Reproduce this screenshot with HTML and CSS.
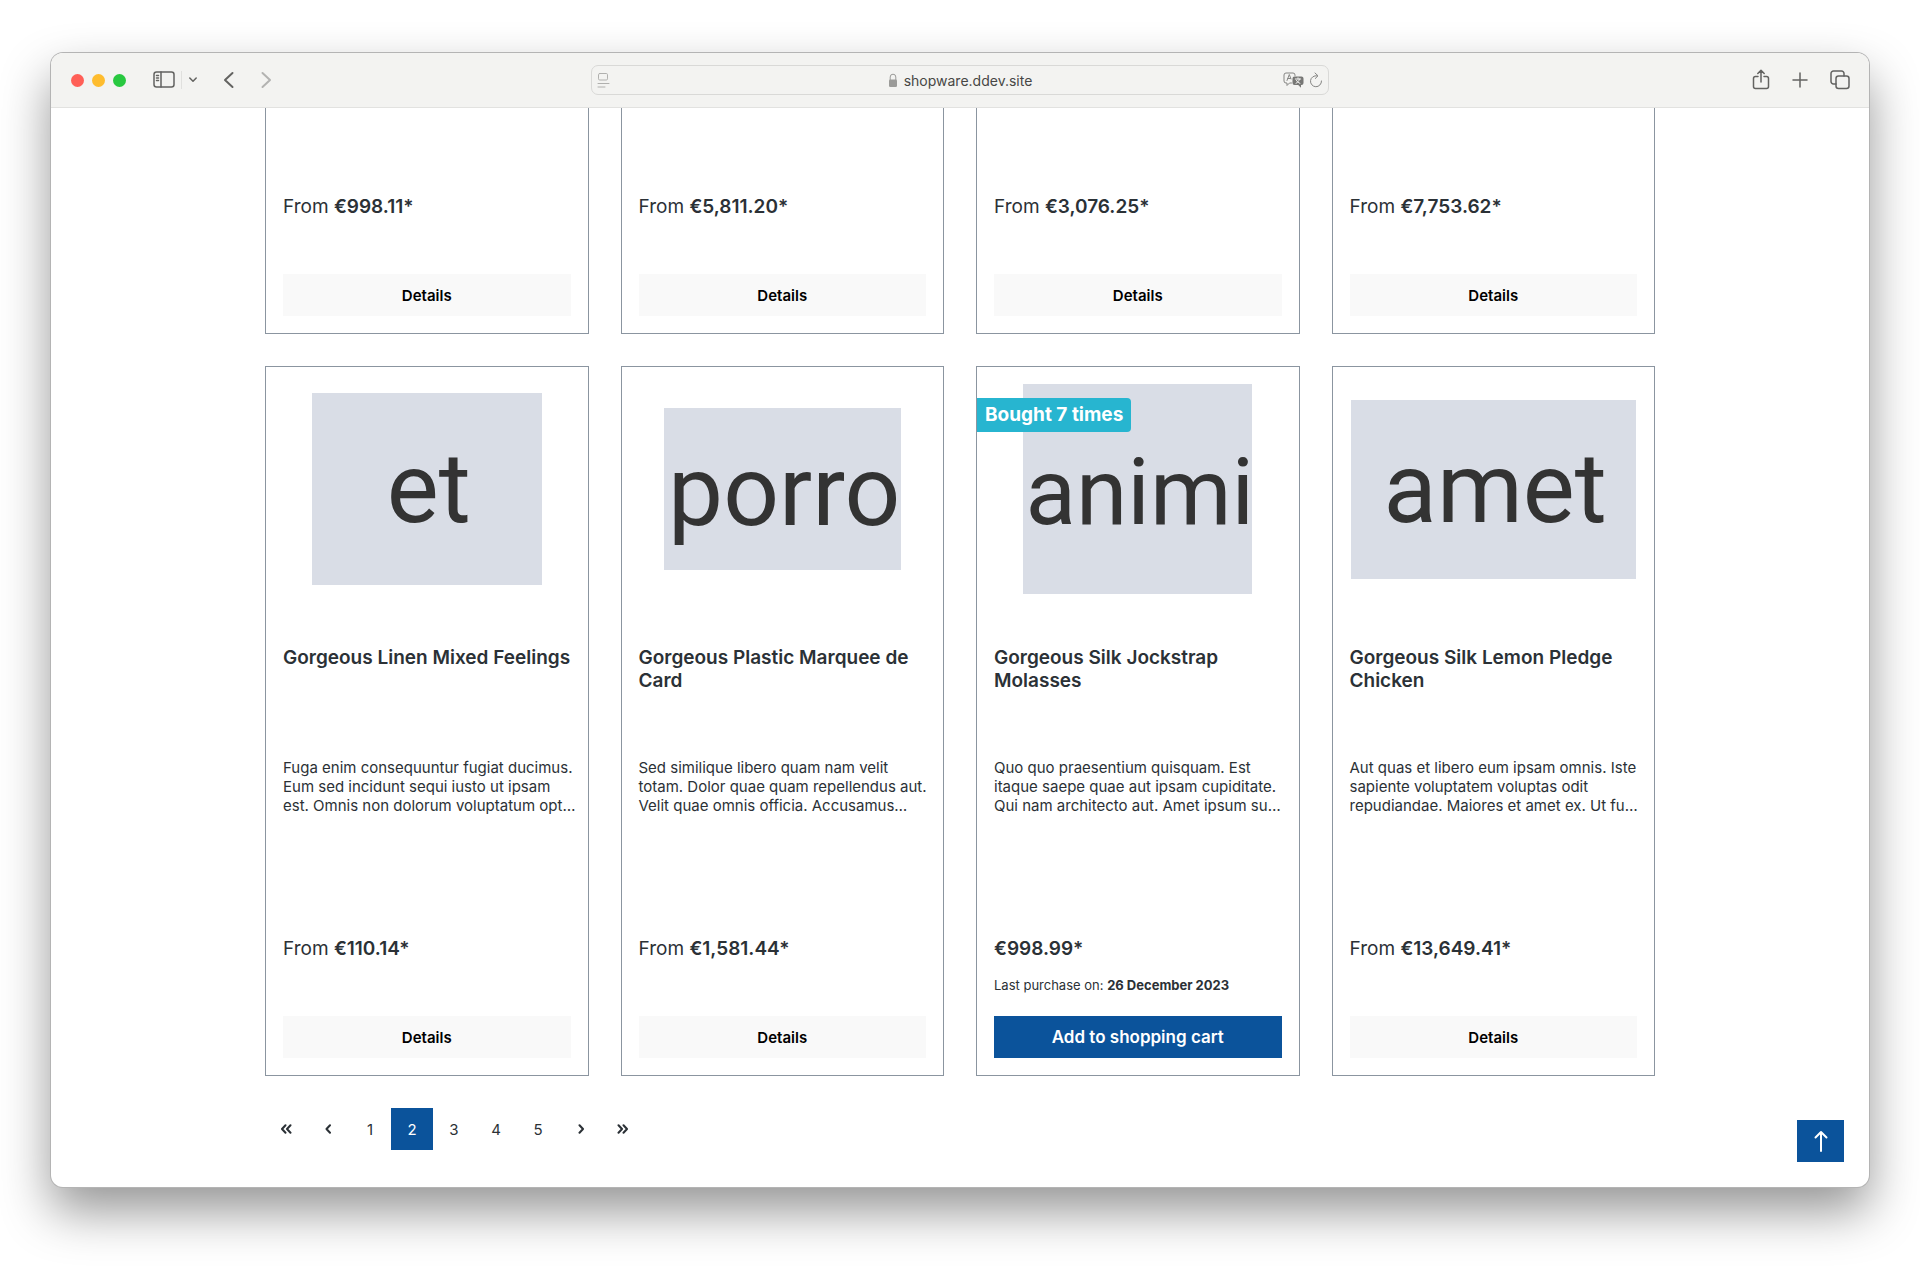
FILE: index.html
```html
<!DOCTYPE html>
<html lang="en">
<head>
<meta charset="utf-8">
<title>shopware.ddev.site</title>
<link rel="stylesheet" href="styles.css">
</head>
<body>
<div class="window">
  <header class="toolbar">
    <div class="tools tools-left">
      <span class="lights"><i class="light red"></i><i class="light yellow"></i><i class="light green"></i></span>
      <button class="tool sidebar" aria-label="Sidebar"><svg width="22" height="18" viewBox="0 0 22 18"><rect x="1" y="1" width="20" height="15" rx="2.5"/><path d="M8 1v15M3.500 4.500h2M3.500 7h2M3.500 9.500h2"/></svg></button>
      <span class="divider"></span>
      <button class="tool more" aria-label="Tab groups"><svg width="10" height="8" viewBox="0 0 10 8"><path d="M1.800 2l3.200 3.300L8.200 2"/></svg></button>
      <button class="tool back" aria-label="Back"><svg width="12" height="18" viewBox="0 0 12 18"><path d="M9.500 2L2 9l7.500 7"/></svg></button>
      <button class="tool forward" aria-label="Forward"><svg width="12" height="18" viewBox="0 0 12 18"><path d="M2.500 2L10 9l-7.500 7"/></svg></button>
    </div>
    <div class="address">
      <svg class="reader" width="14" height="17" viewBox="0 0 14 17"><rect x="1.500" y="1.500" width="9" height="6.500" rx="1.200"/><path d="M1 11.500h11M1 15h7"/></svg>
      <span class="host"><svg width="10" height="15" viewBox="0 0 10 15"><path class="shackle" d="M2.200 7V4a2.800 2.800 0 0 1 5.600 0v3"/><rect class="lock" x="1" y="6.500" width="8" height="7.500" rx="1.300"/></svg>shopware.ddev.site</span>
      <span class="address-end">
        <svg width="21" height="16" viewBox="0 0 21 16"><path d="M8.500 11H6.500L4 13.500V11H3a2 2 0 0 1-2-2V3a2 2 0 0 1 2-2h7a2 2 0 0 1 2 2v.5M4 8.500L6.300 2.500 8 7M4.800 6.500h2.600"/><path class="solid" d="M11.500 4.500h7a2 2 0 0 1 2 2V11a2 2 0 0 1-2 2H18v2.800L15.200 13h-3.700a2 2 0 0 1-2-2V6.500a2 2 0 0 1 2-2z"/><path class="glyph" d="M12.300 7h5.400M15 5.800V7M13 11.300c2-1 3.100-2.300 3.500-4.300M13.400 8.200c.8 1.500 1.800 2.500 3.500 3.100"/></svg>
        <svg width="14" height="17" viewBox="0 0 14 17"><path d="M8 3.800A5.500 5.500 0 1 0 12.500 9M6 1l3 2.800L6.300 6.500"/></svg>
      </span>
    </div>
    <div class="tools tools-right">
      <button class="tool" aria-label="Share"><svg width="18" height="22" viewBox="0 0 18 22"><path d="M6 7.500H3.500A2 2 0 0 0 1.500 9.500v8a2 2 0 0 0 2 2h11a2 2 0 0 0 2-2v-8a2 2 0 0 0-2-2H12M9 13V1.500M5.800 4.500L9 1.400l3.200 3.100"/></svg></button>
      <button class="tool" aria-label="New tab"><svg width="16" height="16" viewBox="0 0 16 16"><path d="M8 1v14M1 8h14"/></svg></button>
      <button class="tool" aria-label="Tab overview"><svg width="20" height="20" viewBox="0 0 20 20"><rect x="6" y="6" width="13" height="12.500" rx="2.500"/><path d="M6 14H3.500A2.500 2.500 0 0 1 1 11.500v-8A2.500 2.500 0 0 1 3.500 1h8A2.500 2.500 0 0 1 14 3.500V6"/></svg></button>
    </div>
  </header>

  <main class="page">
    <div class="listing">
      <article class="card card-cut"><p class="price">From <b>€998.11*</b></p><button class="btn">Details</button></article>
      <article class="card card-cut"><p class="price">From <b>€5,811.20*</b></p><button class="btn">Details</button></article>
      <article class="card card-cut"><p class="price">From <b>€3,076.25*</b></p><button class="btn">Details</button></article>
      <article class="card card-cut"><p class="price">From <b>€7,753.62*</b></p><button class="btn">Details</button></article>

      <article class="card">
        <div class="stage"><div class="thumb thumb-et">et</div></div>
        <h2 class="name">Gorgeous Linen Mixed Feelings</h2>
        <p class="desc">Fuga enim consequuntur fugiat ducimus. Eum sed incidunt sequi iusto ut ipsam est. Omnis non dolorum voluptatum opt…</p>
        <div class="offer"><p class="price">From <b>€110.14*</b></p></div>
        <button class="btn">Details</button>
      </article>
      <article class="card">
        <div class="stage"><div class="thumb thumb-porro">porro</div></div>
        <h2 class="name">Gorgeous Plastic Marquee de Card</h2>
        <p class="desc">Sed similique libero quam nam velit totam. Dolor quae quam repellendus aut. Velit quae omnis officia. Accusamus…</p>
        <div class="offer"><p class="price">From <b>€1,581.44*</b></p></div>
        <button class="btn">Details</button>
      </article>
      <article class="card">
        <span class="badge">Bought 7 times</span>
        <div class="stage"><div class="thumb thumb-animi">animi</div></div>
        <h2 class="name">Gorgeous Silk Jockstrap Molasses</h2>
        <p class="desc">Quo quo praesentium quisquam. Est itaque saepe quae aut ipsam cupiditate. Qui nam architecto aut. Amet ipsum su…</p>
        <div class="offer"><p class="price"><b>€998.99*</b></p><p class="last">Last purchase on: <b>26 December 2023</b></p></div>
        <button class="btn btn-buy">Add to shopping cart</button>
      </article>
      <article class="card">
        <div class="stage"><div class="thumb thumb-amet">amet</div></div>
        <h2 class="name">Gorgeous Silk Lemon Pledge Chicken</h2>
        <p class="desc">Aut quas et libero eum ipsam omnis. Iste sapiente voluptatem voluptas odit repudiandae. Maiores et amet ex. Ut fu…</p>
        <div class="offer"><p class="price">From <b>€13,649.41*</b></p></div>
        <button class="btn">Details</button>
      </article>
    </div>

    <nav class="pages" aria-label="Pagination">
      <a href="#" aria-label="First"><svg width="12" height="10" viewBox="0 0 12 10"><path d="M5.500 1.200L2 5l3.500 3.800M10.500 1.200L7 5l3.500 3.800"/></svg></a>
      <a href="#" aria-label="Previous"><svg width="12" height="10" viewBox="0 0 12 10"><path d="M8 1.200L4.500 5 8 8.800"/></svg></a>
      <a href="#">1</a>
      <a href="#" class="current" aria-current="page">2</a>
      <a href="#">3</a>
      <a href="#">4</a>
      <a href="#">5</a>
      <a href="#" aria-label="Next"><svg width="12" height="10" viewBox="0 0 12 10"><path d="M5.500 1.200L9 5 5.500 8.800"/></svg></a>
      <a href="#" aria-label="Last"><svg width="12" height="10" viewBox="0 0 12 10"><path d="M2.500 1.200L6 5 2.500 8.800M7.500 1.200L11 5 7.500 8.800"/></svg></a>
    </nav>
    <button class="to-top" aria-label="Back to top"><svg width="14" height="22" viewBox="0 0 14 22"><path d="M7 21V2M1.500 7.500L7 2l5.500 5.500"/></svg></button>
  </main>
</div>
</body>
</html>
```

FILE: styles.css
```css
* { box-sizing: border-box; }

body {
  margin: 0;
  padding: 53px 51px 92px;
  background: #fff;
  color: #2b3136;
  font-family: Inter, "Liberation Sans", sans-serif;
}

h2, p { margin: 0; }

button {
  border: 0;
  padding: 0;
  background: none;
  color: inherit;
  font-family: inherit;
}

svg {
  display: block;
  fill: none;
  stroke: currentColor;
  stroke-linecap: round;
  stroke-linejoin: round;
}

.window {
  position: relative;
  border-radius: 12px;
  background: #fff;
  box-shadow: 0 0 0 1px #b4b4b4, 0 24px 50px rgba(0, 0, 0, 0.42);
}

/* Browser toolbar */
.toolbar {
  display: grid;
  grid-template-columns: 1fr 738px 1fr;
  align-items: center;
  height: 55px;
  border-bottom: 1px solid #e2e2e0;
  border-radius: 12px 12px 0 0;
  background: #f3f3f1;
  color: #636361;
}

.tools { display: flex; align-items: center; }
.tools-left { padding-left: 20px; }
.tools-right { justify-content: flex-end; gap: 22px; padding-right: 19px; }
.tool { stroke-width: 1.5px; }

.lights { display: flex; gap: 8px; }
.light { width: 13px; height: 13px; border-radius: 50%; }
.red { background: #ff5f57; }
.yellow { background: #febc2e; }
.green { background: #28c840; }

.sidebar { margin-left: 27px; }
.divider { width: 1px; height: 18px; margin: 0 6px; background: #e0e0de; }
.back, .forward { margin-left: 25px; stroke-width: 2px; }
.forward { color: #b3b3b1; }

.address {
  display: grid;
  grid-template-columns: 1fr auto 1fr;
  align-items: center;
  height: 30px;
  padding: 0 5px;
  border: 1px solid #d9d9d7;
  border-radius: 7px;
  color: #858583;
}
.reader { color: #b0b0ae; }
.host { display: flex; align-items: center; gap: 6px; color: #474745; font-size: 14px; }
.shackle { stroke: #9b9b99; }
.lock { fill: #9b9b99; stroke: none; }
.address-end { display: flex; align-items: center; justify-content: flex-end; gap: 5px; }
.solid { fill: #777775; stroke: none; }
.glyph { stroke: #f3f3f1; }

/* Product listing */
.page {
  padding: 0 24px 37px;
}

.listing {
  display: grid;
  grid-template-columns: repeat(4, minmax(0, 1fr));
  gap: 32px;
  max-width: 1390px;
  margin: 0 auto;
}

.card {
  position: relative;
  display: flex;
  flex-direction: column;
  padding: 17px;
  border: 1px solid #8b95a0;
}

.card-cut { border-top: 0; padding-top: 86px; }
.card-cut .price { margin-bottom: 54px; }

.stage {
  display: flex;
  align-items: center;
  justify-content: center;
  height: 210px;
}

.thumb {
  display: flex;
  align-items: center;
  justify-content: center;
  padding-left: 4px;
  background: #d9dde6;
  color: #333;
  font-family: Roboto, sans-serif;
  font-size: 98px;
  line-height: 1;
}
.thumb-et { width: 230px; height: 192px; }
.thumb-porro { width: 237px; height: 162px; padding-top: 6px; }
.thumb-animi { width: 229px; height: 210px; padding-top: 6px; font-size: 93px; }
.thumb-amet { width: 285px; height: 179px; }

.badge {
  position: absolute;
  top: 31px;
  left: 0;
  padding: 0 8px;
  border-radius: 0 4px 4px 0;
  background: #27b5d0;
  color: #fff;
  font-size: 19px;
  font-weight: 700;
  line-height: 34px;
}

.name {
  min-height: 72px;
  margin-top: 52px;
  font-size: 19px;
  font-weight: 600;
  line-height: 23px;
}

/* The description runs slightly into the card's right padding. */
.desc {
  min-height: 138px;
  margin: 40px -8px 40px 0;
  font-size: 15px;
  line-height: 19px;
}

.offer { min-height: 80px; }
.price { font-size: 19px; line-height: 26px; }
.price b { font-weight: 600; }
.last { margin-top: 15px; font-size: 13px; line-height: 16px; }

.btn {
  height: 42px;
  background: #f9f9f9;
  color: #000;
  font-size: 15px;
  font-weight: 600;
}
.btn-buy { background: #0b539b; color: #fff; font-size: 17px; }

/* Pagination */
.pages {
  display: flex;
  max-width: 1390px;
  margin: 32px auto 0;
}
.pages a {
  display: flex;
  align-items: center;
  justify-content: center;
  width: 42px;
  height: 42px;
  color: #2b3136;
  font-size: 15px;
  text-decoration: none;
  stroke-width: 2px;
}
.pages .current { background: #0b539b; color: #fff; }

.to-top {
  position: absolute;
  right: 25px;
  bottom: 25px;
  display: flex;
  align-items: center;
  justify-content: center;
  width: 47px;
  height: 42px;
  background: #0b539b;
  color: #fff;
  stroke-width: 2px;
}
```
